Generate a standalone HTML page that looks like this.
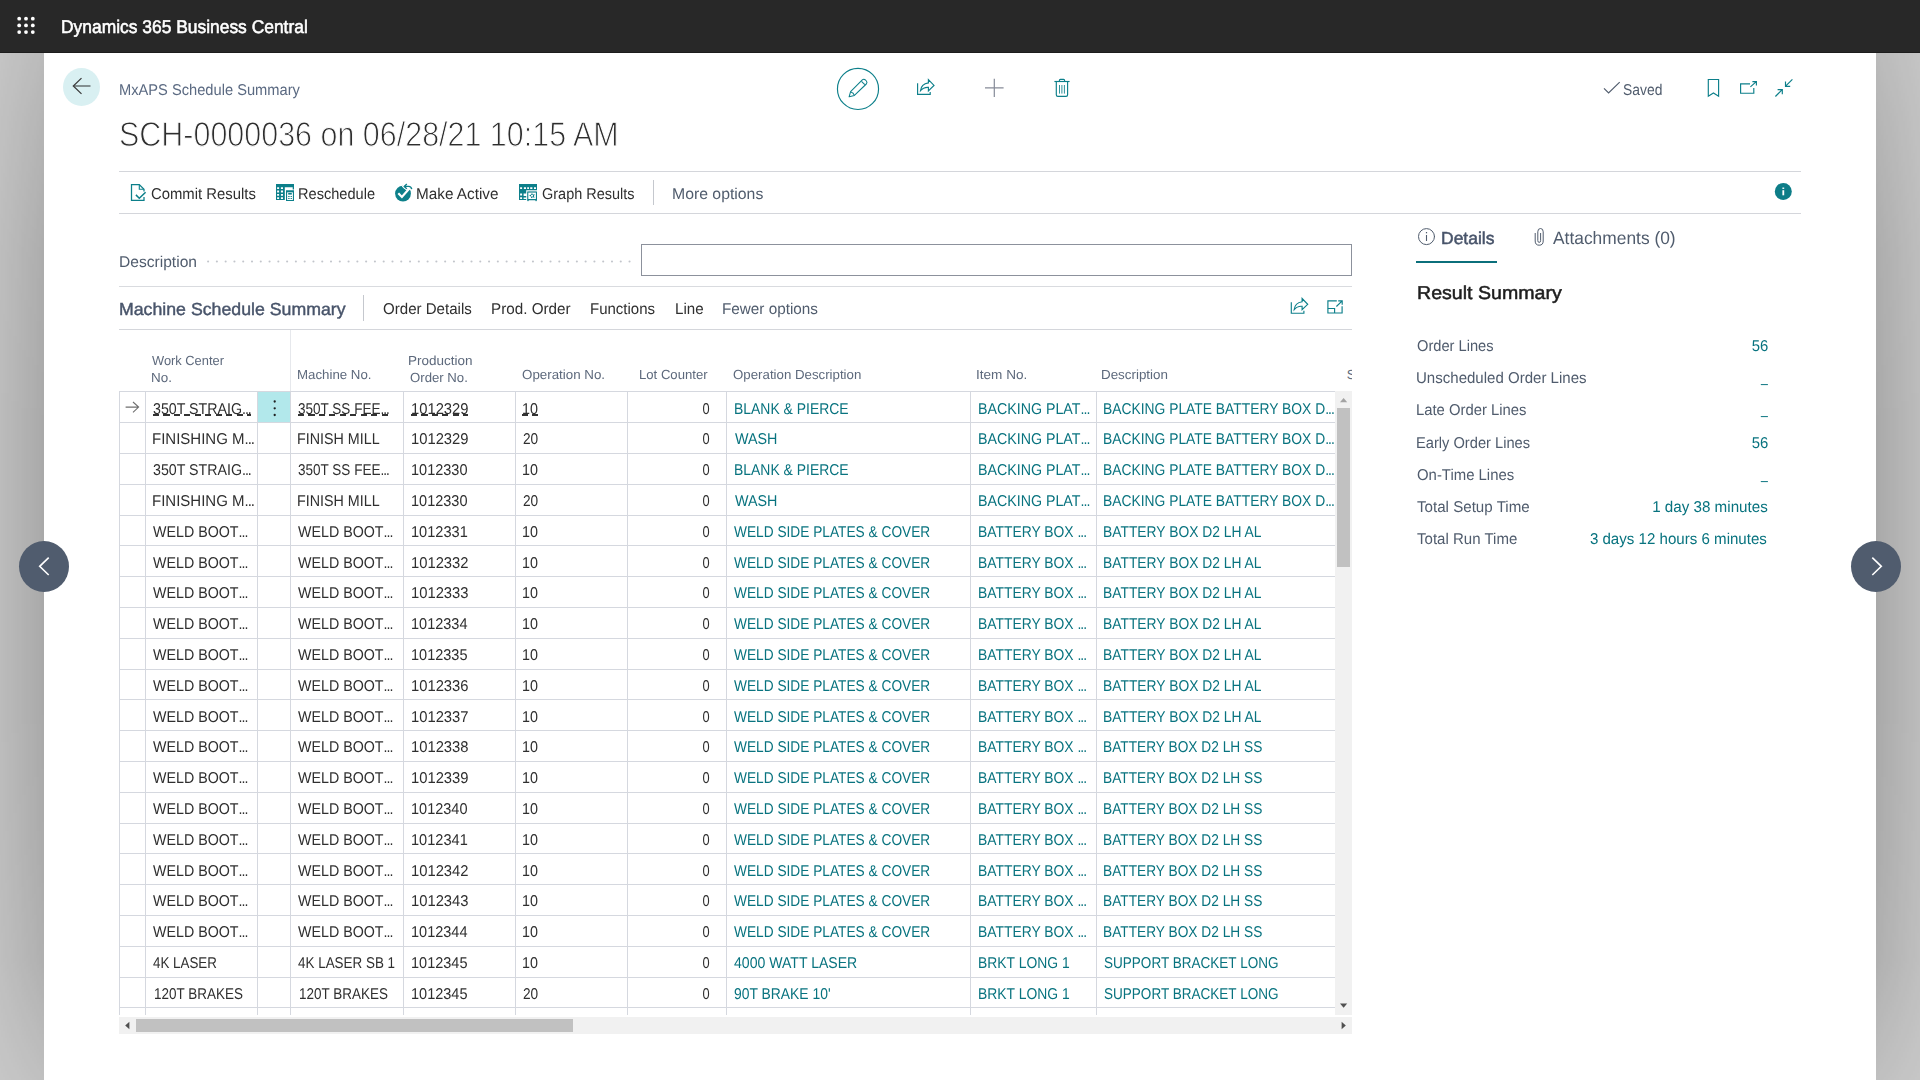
<!DOCTYPE html>
<html lang="en"><head><meta charset="utf-8"><title>MxAPS Schedule Summary - Dynamics 365 Business Central</title>
<style>
html,body{margin:0;padding:0}
body{width:1920px;height:1080px;overflow:hidden;position:relative;font-family:"Liberation Sans", sans-serif;background:#cdcdcd;text-rendering:geometricPrecision}
.abs{position:absolute}
.topbar{position:absolute;left:0;top:0;width:1920px;height:52px;background:#282828;border-bottom:1px solid #1d1d1d}
.page{position:absolute;left:44px;top:53px;width:1832px;height:1027px;background:#fff}
.shw{position:absolute;left:0;top:53px;width:1920px;height:1027px;overflow:hidden;-webkit-mask-image:linear-gradient(to bottom,rgba(0,0,0,.5) 0,rgba(0,0,0,.67) 67px,rgba(0,0,0,.9) 200px,#000 380px,#000 640px,rgba(0,0,0,.93) 800px,rgba(0,0,0,.81) 907px,rgba(0,0,0,.36) 1027px);mask-image:linear-gradient(to bottom,rgba(0,0,0,.5) 0,rgba(0,0,0,.67) 67px,rgba(0,0,0,.9) 200px,#000 380px,#000 640px,rgba(0,0,0,.93) 800px,rgba(0,0,0,.81) 907px,rgba(0,0,0,.36) 1027px)}
.shw>div{position:absolute;left:44px;top:-300px;width:1832px;height:1700px;box-shadow:0 0 118px rgba(0,0,0,.35)}
.nav{position:absolute;width:50px;height:51px;border-radius:50%;background:#505c6e}
.t{position:absolute;white-space:nowrap;margin:0;transform-origin:0 0}
.du{position:absolute;height:2px;background:repeating-linear-gradient(90deg,#333 0,#333 6.1px,transparent 6.1px,transparent 10.45px)}
.el{letter-spacing:-1.1px}
.clipS{width:5.6px;overflow:hidden}
</style></head><body>
<div class="shw"><div></div></div>
<div class="page"></div>
<div class="topbar"></div>
<svg class="abs" style="left:0;top:0" width="52" height="52" viewBox="0 0 52 52" fill="#fff"><circle cx="19.2" cy="18.7" r="1.9"/><circle cx="19.2" cy="25.4" r="1.9"/><circle cx="19.2" cy="32.1" r="1.9"/><circle cx="26.0" cy="18.7" r="1.9"/><circle cx="26.0" cy="25.4" r="1.9"/><circle cx="26.0" cy="32.1" r="1.9"/><circle cx="32.8" cy="18.7" r="1.9"/><circle cx="32.8" cy="25.4" r="1.9"/><circle cx="32.8" cy="32.1" r="1.9"/></svg>
<div class="nav" style="left:19px;top:541px"><svg width="50" height="50" viewBox="0 0 50 50"><path d="M29.7 16.6 L20.7 25.3 L29.7 34" fill="none" stroke="#fff" stroke-width="1.6"/></svg></div>
<div class="nav" style="left:1851px;top:541px"><svg width="50" height="50" viewBox="0 0 50 50"><path d="M21.3 16.6 L30.3 25.3 L21.3 34" fill="none" stroke="#fff" stroke-width="1.6"/></svg></div>
<div class="abs" style="left:63px;top:68px;width:37px;height:38px;border-radius:50%;background:#d9f0f2"></div>
<svg class="abs" style="left:60px;top:64px" width="44" height="44" viewBox="60 64 44 44" fill="none"><path d="M90.5 86 H74" stroke="#667070" stroke-width="1.5"/><path d="M81.5 78.1 L73.3 86 L81.5 93.9" stroke="#3a3a3a" stroke-width="1.25"/></svg>
<div class="abs" style="left:119px;top:171px;width:1682px;height:1px;background:#d4d6db"></div>
<div class="abs" style="left:119px;top:213px;width:1682px;height:1px;background:#d4d6db"></div>
<div class="abs" style="left:119px;top:286px;width:1233px;height:1px;background:#d9dbdf"></div>
<div class="abs" style="left:119px;top:329px;width:1233px;height:1px;background:#d4d6db"></div>
<div class="abs" style="left:653px;top:180px;width:1px;height:25px;background:#c5c8ce"></div>
<div class="abs" style="left:363px;top:295px;width:1px;height:26px;background:#c5c8ce"></div>
<svg class="abs" style="left:0;top:0" width="700" height="300" viewBox="0 0 700 300" fill="#c2c5cb"><circle cx="208.10" cy="261.5" r="1.05"/><circle cx="216.88" cy="261.5" r="1.05"/><circle cx="225.66" cy="261.5" r="1.05"/><circle cx="234.44" cy="261.5" r="1.05"/><circle cx="243.22" cy="261.5" r="1.05"/><circle cx="252.00" cy="261.5" r="1.05"/><circle cx="260.78" cy="261.5" r="1.05"/><circle cx="269.56" cy="261.5" r="1.05"/><circle cx="278.34" cy="261.5" r="1.05"/><circle cx="287.12" cy="261.5" r="1.05"/><circle cx="295.90" cy="261.5" r="1.05"/><circle cx="304.68" cy="261.5" r="1.05"/><circle cx="313.46" cy="261.5" r="1.05"/><circle cx="322.24" cy="261.5" r="1.05"/><circle cx="331.02" cy="261.5" r="1.05"/><circle cx="339.80" cy="261.5" r="1.05"/><circle cx="348.58" cy="261.5" r="1.05"/><circle cx="357.36" cy="261.5" r="1.05"/><circle cx="366.14" cy="261.5" r="1.05"/><circle cx="374.92" cy="261.5" r="1.05"/><circle cx="383.70" cy="261.5" r="1.05"/><circle cx="392.48" cy="261.5" r="1.05"/><circle cx="401.26" cy="261.5" r="1.05"/><circle cx="410.04" cy="261.5" r="1.05"/><circle cx="418.82" cy="261.5" r="1.05"/><circle cx="427.60" cy="261.5" r="1.05"/><circle cx="436.38" cy="261.5" r="1.05"/><circle cx="445.16" cy="261.5" r="1.05"/><circle cx="453.94" cy="261.5" r="1.05"/><circle cx="462.72" cy="261.5" r="1.05"/><circle cx="471.50" cy="261.5" r="1.05"/><circle cx="480.28" cy="261.5" r="1.05"/><circle cx="489.06" cy="261.5" r="1.05"/><circle cx="497.84" cy="261.5" r="1.05"/><circle cx="506.62" cy="261.5" r="1.05"/><circle cx="515.40" cy="261.5" r="1.05"/><circle cx="524.18" cy="261.5" r="1.05"/><circle cx="532.96" cy="261.5" r="1.05"/><circle cx="541.74" cy="261.5" r="1.05"/><circle cx="550.52" cy="261.5" r="1.05"/><circle cx="559.30" cy="261.5" r="1.05"/><circle cx="568.08" cy="261.5" r="1.05"/><circle cx="576.86" cy="261.5" r="1.05"/><circle cx="585.64" cy="261.5" r="1.05"/><circle cx="594.42" cy="261.5" r="1.05"/><circle cx="603.20" cy="261.5" r="1.05"/><circle cx="611.98" cy="261.5" r="1.05"/><circle cx="620.76" cy="261.5" r="1.05"/><circle cx="629.54" cy="261.5" r="1.05"/></svg>
<div class="abs" style="left:641px;top:244px;width:709px;height:30px;border:1px solid #8c919c;background:#fff"></div>
<div class="abs" style="left:1416px;top:261px;width:81px;height:2.4px;background:#0b6f7b"></div>
<svg class="abs" style="left:0;top:0" width="1920" height="1080" viewBox="0 0 1920 1080" shape-rendering="geometricPrecision">
<defs><clipPath id="gc"><rect x="119" y="329" width="1217" height="686"/></clipPath></defs>
<g clip-path="url(#gc)">
<rect x="258" y="392" width="32" height="30" fill="#b2e8eb"/>
<rect x="119" y="391" width="1216" height="1" fill="#d5d8df"/>
<rect x="119" y="422" width="1216" height="1" fill="#d5d8df"/>
<rect x="119" y="453" width="1216" height="1" fill="#d5d8df"/>
<rect x="119" y="484" width="1216" height="1" fill="#d5d8df"/>
<rect x="119" y="515" width="1216" height="1" fill="#d5d8df"/>
<rect x="119" y="545" width="1216" height="1" fill="#d5d8df"/>
<rect x="119" y="576" width="1216" height="1" fill="#d5d8df"/>
<rect x="119" y="607" width="1216" height="1" fill="#d5d8df"/>
<rect x="119" y="638" width="1216" height="1" fill="#d5d8df"/>
<rect x="119" y="669" width="1216" height="1" fill="#d5d8df"/>
<rect x="119" y="699" width="1216" height="1" fill="#d5d8df"/>
<rect x="119" y="730" width="1216" height="1" fill="#d5d8df"/>
<rect x="119" y="761" width="1216" height="1" fill="#d5d8df"/>
<rect x="119" y="792" width="1216" height="1" fill="#d5d8df"/>
<rect x="119" y="823" width="1216" height="1" fill="#d5d8df"/>
<rect x="119" y="853" width="1216" height="1" fill="#d5d8df"/>
<rect x="119" y="884" width="1216" height="1" fill="#d5d8df"/>
<rect x="119" y="915" width="1216" height="1" fill="#d5d8df"/>
<rect x="119" y="946" width="1216" height="1" fill="#d5d8df"/>
<rect x="119" y="977" width="1216" height="1" fill="#d5d8df"/>
<rect x="119" y="1007" width="1216" height="1" fill="#d5d8df"/>
<rect x="119" y="1038" width="1216" height="1" fill="#d5d8df"/>
<rect x="119" y="391" width="1" height="640" fill="#d5d8df"/>
<rect x="145" y="391" width="1" height="640" fill="#d5d8df"/>
<rect x="257" y="391" width="1" height="640" fill="#d5d8df"/>
<rect x="290" y="391" width="1" height="640" fill="#d5d8df"/>
<rect x="403" y="391" width="1" height="640" fill="#d5d8df"/>
<rect x="515" y="391" width="1" height="640" fill="#d5d8df"/>
<rect x="627" y="391" width="1" height="640" fill="#d5d8df"/>
<rect x="726" y="391" width="1" height="640" fill="#d5d8df"/>
<rect x="970" y="391" width="1" height="640" fill="#d5d8df"/>
<rect x="1096" y="391" width="1" height="640" fill="#d5d8df"/>
<rect x="290" y="330" width="1" height="61" fill="#e6e8ec"/>
</g>
<path d="M125.6 407.1 H138.6 M133 402 L138.6 407.1 L133 412.3" fill="none" stroke="#6f6f6f" stroke-width="1.1"/>
<circle cx="274.7" cy="401.5" r="1.15" fill="#1f1f1f"/>
<circle cx="274.7" cy="408.3" r="1.15" fill="#1f1f1f"/>
<circle cx="274.7" cy="415.0" r="1.15" fill="#1f1f1f"/>
</svg>
<div class="abs" style="left:1335px;top:391px;width:17px;height:624px;background:#f1f1f1"></div>
<div class="abs" style="left:1337px;top:408px;width:13px;height:159px;background:#c1c1c1"></div>
<svg class="abs" style="left:1335px;top:391px" width="17" height="624" viewBox="0 0 17 624"><path d="M5 11.2 L8.6 7 L12.2 11.2Z" fill="#a3a3a3"/><path d="M5 612.6 L8.6 616.8 L12.2 612.6Z" fill="#505050"/></svg>
<div class="abs" style="left:119px;top:1017px;width:1233px;height:17px;background:#f1f1f1"></div>
<div class="abs" style="left:136px;top:1019px;width:437px;height:13px;background:#c1c1c1"></div>
<svg class="abs" style="left:119px;top:1017px" width="1233" height="17" viewBox="0 0 1233 17"><path d="M10.4 4.8 L6.2 8.5 L10.4 12.2Z" fill="#505050"/><path d="M1222.6 4.8 L1226.8 8.5 L1222.6 12.2Z" fill="#505050"/></svg>
<svg class="abs" style="left:0;top:0" width="1920" height="1080" viewBox="0 0 1920 1080" fill="none" stroke-linejoin="round" stroke-linecap="round">
<g stroke="#0c7f8a" stroke-width="1.25" stroke-linecap="butt" stroke-linejoin="miter"><path d="M144 197 V200.3 H131.5 V184.6 H139.3 L144 189.3 V191.5"/><path d="M139.3 184.8 V189.2 H143.8" stroke-width="1.1"/><path d="M135.9 194.9 L139.3 198.3 L145.6 192.2" stroke-width="1.5"/></g>
<g fill="#0c7f8a" stroke="none"><path fill-rule="evenodd" d="M276 184 H294 V189.6 H292.7 V187.2 H284.8 V200 H276 Z M277.1 187.2 H279.1 V189 H277.1Z M280.9 187.2 H283 V189 H280.9Z M277.1 190.6 H279.1 V192.4 H277.1Z M280.9 190.6 H283 V192.4 H280.9Z M277.1 194 H279.1 V195.8 H277.1Z M280.9 194 H283 V195.8 H280.9Z M277.1 197.3 H279.1 V199 H277.1Z M280.9 197.3 H283 V199 H280.9Z"/><path fill-rule="evenodd" d="M286 190.2 H294 V201 H286Z M287.1 192.2 H292.9 V199.9 H287.1Z"/><rect x="288.2" y="193" width="3.6" height="1.6"/><rect x="288.2" y="196" width="1.4" height="1"/><rect x="290.6" y="196" width="1.3" height="1"/><rect x="288.2" y="198" width="1.4" height="1"/><rect x="290.6" y="198" width="1.3" height="1"/><rect x="287.1" y="191.2" width="5.8" height="1.2" opacity=".35"/></g>
<g><circle cx="403" cy="193.6" r="7.9" fill="#0d808a" stroke="none"/><path d="M403.8 186.4 H408.8 Q411.6 186.6 411.9 189.6" stroke="#fff" stroke-width="4" stroke-linecap="butt"/><path d="M407.4 183.4 L404 186.4 L407.4 189.4" stroke="#fff" stroke-width="3" stroke-linecap="butt" stroke-linejoin="miter"/><path d="M398.3 193.2 L401.9 196.9 L409.8 187.9" stroke="#fff" stroke-width="2.2" stroke-linecap="butt" stroke-linejoin="miter"/><path d="M404.6 186.4 H408.6 Q411.3 186.5 411.7 189.2" stroke="#0c7f8a" stroke-width="1.4" stroke-linecap="butt"/><path d="M406.8 184.1 L404.3 186.4 L406.8 188.7" stroke="#0c7f8a" stroke-width="1.4" stroke-linecap="butt" stroke-linejoin="miter"/></g>
<g fill="#0c7f8a" stroke="none"><path fill-rule="evenodd" d="M519 184 H537 V190.2 H526.2 V200 H519 Z M520.1 187.2 H522.1 V189 H520.1Z M523.9 187.2 H526 V189 H523.9Z M527.2 187.2 H529 V189 H527.2Z M530.2 187.2 H532.4 V189 H530.2Z M534 187.2 H536 V189 H534Z M520.1 193.6 H522.1 V195.6 H520.1Z M523.6 193.6 H526.2 V196 H523.6Z M520.1 197.2 H522.1 V199 H520.1Z M523.6 197.4 H526.2 V199 H523.6Z"/><path fill-rule="evenodd" d="M527.2 191.4 H537 V200.2 H527.2Z M528.3 192.6 H535.9 V199 H528.3Z"/><rect x="527.2" y="200.2" width="1.6" height="0.9"/><rect x="535.3" y="200.2" width="1.6" height="0.9"/><path fill-rule="evenodd" d="M532 192.9 L532.9 194.5 L534.9 194.3 L533.9 195.9 L534.6 197.8 L532.7 197.2 L531.2 198.3 L530.9 196.5 L529.1 195.6 L530.8 194.8 Z M532 194.7 A0.95 0.95 0 1 0 532.01 194.7Z"/><rect x="528.3" y="191.4" width="7.6" height="1.2" opacity=".3"/></g>
<circle cx="1783.3" cy="191.4" r="8.5" fill="#0d7d88" stroke="none"/>
<rect x="1782.4" y="190.2" width="1.8" height="5.1" fill="#fff" stroke="none"/><rect x="1782.4" y="187.5" width="1.8" height="1.5" fill="#fff" stroke="none" opacity=".9"/>
<circle cx="858" cy="88.9" r="20.55" stroke="#0c7f8a" stroke-width="1.15"/>
<g stroke="#0c7f8a" stroke-width="1.05" stroke-linecap="butt"><path d="M850.6 91.6 L862.3 79.9 Q863.9 78.6 865.4 80 L866.4 81 Q867.6 82.5 866.3 84 L854.4 95.4 L849.1 96.8 Z"/><path d="M861.5 81.3 L864.8 84.6"/><path d="M850.8 91.9 Q853.6 92.4 854.2 95.1"/></g>
<g stroke="#0c7f8a" stroke-width="1.15" stroke-linecap="butt" stroke-linejoin="miter" transform="translate(0 0)"><path d="M917.6 83.3 V94.4 H930.2 V91.9"/><path d="M928.4 79.6 L934 85.4 L928.4 90.8 V87.4 Q923.6 87 920.5 90.7 Q921.2 84 928.4 82.9 Z"/></g>
<path d="M985 87.9 H1003.6 M994.3 78.8 V97" stroke="#868b98" stroke-width="1.2" stroke-linecap="butt"/>
<g stroke="#0c7f8a" stroke-width="1.15" stroke-linecap="butt"><path d="M1054.4 81.5 H1069.6"/><path d="M1059.4 81.3 V80.4 Q1059.4 79.4 1060.4 79.4 H1063.6 Q1064.6 79.4 1064.6 80.4 V81.3"/><path d="M1056.3 81.6 V94.8 Q1056.3 96.4 1057.9 96.4 H1066 Q1067.6 96.4 1067.6 94.8 V81.6"/><path d="M1059.5 85 V93.6 M1061.9 85 V93.6 M1064.4 85 V93.6" stroke-width="1" opacity=".85"/></g>
<path d="M1604 88.4 L1608.6 93 L1619.7 82.2" stroke="#505c6d" stroke-width="1.15" stroke-linecap="butt" stroke-linejoin="miter"/>
<path d="M1708.3 79.5 H1718.6 V96.2 L1713.45 92.9 L1708.3 96.2 Z" stroke="#0c7f8a" stroke-width="1.15" stroke-linejoin="miter"/>
<g stroke="#0c7f8a" stroke-width="1.15" stroke-linecap="butt" stroke-linejoin="miter"><path d="M1750 83.9 H1740.6 V93.2 H1753.8 V88"/><path d="M1750.4 86.9 L1756.3 81.6 M1752.4 81.6 H1756.4 V85.6"/></g>
<g stroke="#0c7f8a" stroke-width="1.15" stroke-linecap="butt" stroke-linejoin="miter"><path d="M1792.4 79.4 L1785.6 86.2 M1785.5 81.6 V86.3 H1790.2"/><path d="M1775.4 96.5 L1782.2 89.7 M1777.6 89.6 H1782.3 V94.3"/></g>
<circle cx="1426.5" cy="236.6" r="8" stroke="#505c6d" stroke-width="1"/><path d="M1426.5 235 V241" stroke="#505c6d" stroke-width="1.1" stroke-linecap="butt"/><rect x="1425.9" y="232" width="1.2" height="1.3" fill="#505c6d" stroke="none"/>
<g stroke="#505c6d" stroke-width="1" stroke-linecap="butt"><path d="M1535.2 233 V241 Q1535.2 245.2 1539.2 245.2 Q1543.2 245.2 1543.2 241 V231.8 Q1543.2 228.5 1540.5 228.5 Q1537.8 228.5 1537.8 231.8 V240.6 Q1537.8 242.4 1539.2 242.4 Q1540.6 242.4 1540.6 240.6 V233"/></g>
<g stroke="#0c7f8a" stroke-width="1.15" stroke-linecap="butt" stroke-linejoin="miter" transform="translate(373.7 218.9)"><path d="M917.6 83.3 V94.4 H930.2 V91.9"/><path d="M928.4 79.6 L934 85.4 L928.4 90.8 V87.4 Q923.6 87 920.5 90.7 Q921.2 84 928.4 82.9 Z"/></g>
<g stroke="#0c7f8a" stroke-width="1.15" stroke-linecap="butt" stroke-linejoin="miter"><path d="M1336.8 300.9 H1327.9 V313 H1342.1 V306.2"/><path d="M1327.9 308.5 H1334.6 V313"/><path d="M1336.4 306.5 L1342.2 300.8 M1338.2 300.9 H1342.2 V304.8"/></g>
</svg>
<div class="t" style="top:18.00px;font-size:18.4px;line-height:18.4px;height:18.4px;color:#fff;-webkit-text-stroke:0.55px #fff;transform:scaleX(0.9468);left:61.45px;">Dynamics 365 Business Central</div>
<div class="t" style="top:83.00px;font-size:15.6px;line-height:15.6px;height:15.6px;color:#5b6a82;transform:scaleX(0.9400);left:118.96px;">MxAPS Schedule Summary</div>
<div class="t" style="top:118.00px;font-size:34.4px;line-height:34.4px;height:34.4px;color:#2e2e2e;-webkit-text-stroke:1.0px #fff;transform:scaleX(0.8857);left:118.61px;">SCH-0000036 on 06/28/21 10:15 AM</div>
<div class="t" style="top:187.00px;font-size:15.6px;line-height:15.6px;height:15.6px;color:#2f2f2f;transform:scaleX(0.9524);left:150.80px;">Commit Results</div>
<div class="t" style="top:187.00px;font-size:15.6px;line-height:15.6px;height:15.6px;color:#2f2f2f;transform:scaleX(0.9358);left:297.76px;">Reschedule</div>
<div class="t" style="top:187.00px;font-size:15.6px;line-height:15.6px;height:15.6px;color:#2f2f2f;transform:scaleX(0.9819);left:416.02px;">Make Active</div>
<div class="t" style="top:187.00px;font-size:15.6px;line-height:15.6px;height:15.6px;color:#2f2f2f;transform:scaleX(0.9282);left:541.50px;">Graph Results</div>
<div class="t" style="top:187.00px;font-size:15.6px;line-height:15.6px;height:15.6px;color:#505c6d;transform:scaleX(1.0129);left:672.29px;">More options</div>
<div class="t" style="top:83.00px;font-size:15.6px;line-height:15.6px;height:15.6px;color:#505c6d;transform:scaleX(0.8899);left:1622.75px;">Saved</div>
<div class="t" style="top:255.00px;font-size:15.6px;line-height:15.6px;height:15.6px;color:#505c6d;transform:scaleX(0.9997);left:118.90px;">Description</div>
<div class="t" style="top:301.00px;font-size:17.4px;line-height:17.4px;height:17.4px;color:#48546a;-webkit-text-stroke:0.42px #48546a;transform:scaleX(1.0189);left:118.88px;">Machine Schedule Summary</div>
<div class="t" style="top:302.00px;font-size:15.6px;line-height:15.6px;height:15.6px;color:#2f2f2f;transform:scaleX(0.9668);left:382.70px;">Order Details</div>
<div class="t" style="top:302.00px;font-size:15.6px;line-height:15.6px;height:15.6px;color:#2f2f2f;transform:scaleX(0.9767);left:491.32px;">Prod. Order</div>
<div class="t" style="top:302.00px;font-size:15.6px;line-height:15.6px;height:15.6px;color:#2f2f2f;transform:scaleX(0.9624);left:589.74px;">Functions</div>
<div class="t" style="top:302.00px;font-size:15.6px;line-height:15.6px;height:15.6px;color:#2f2f2f;transform:scaleX(0.9709);left:674.73px;">Line</div>
<div class="t" style="top:302.00px;font-size:15.6px;line-height:15.6px;height:15.6px;color:#505c6d;transform:scaleX(0.9800);left:721.62px;">Fewer options</div>
<div class="t" style="top:230.00px;font-size:17.3px;line-height:17.3px;height:17.3px;color:#48546a;-webkit-text-stroke:0.5px #48546a;transform:scaleX(1.0118);left:1440.89px;">Details</div>
<div class="t" style="top:230.00px;font-size:17.9px;line-height:17.9px;height:17.9px;color:#505c6d;transform:scaleX(0.9711);left:1552.50px;">Attachments (0)</div>
<div class="t" style="top:284.00px;font-size:18.7px;line-height:18.7px;height:18.7px;color:#1e1e1e;-webkit-text-stroke:0.5px #1e1e1e;transform:scaleX(1.0481);left:1416.55px;">Result Summary</div>
<div class="t" style="top:339.00px;font-size:15.6px;line-height:15.6px;height:15.6px;color:#505c6d;transform:scaleX(0.9391);left:1416.70px;">Order Lines</div>
<div class="t" style="top:339.00px;font-size:15.6px;line-height:15.6px;height:15.6px;color:#08737f;transform:scaleX(0.9537);right:151.86px;transform-origin:100% 0;">56</div>
<div class="t" style="top:371.00px;font-size:15.6px;line-height:15.6px;height:15.6px;color:#505c6d;transform:scaleX(0.9646);left:1415.74px;">Unscheduled Order Lines</div>
<div class="t" style="top:370.00px;font-size:15.6px;line-height:15.6px;height:15.6px;color:#08737f;transform:scaleX(0.7800);right:152.76px;transform-origin:100% 0;">_</div>
<div class="t" style="top:403.00px;font-size:15.6px;line-height:15.6px;height:15.6px;color:#505c6d;transform:scaleX(0.9510);left:1415.75px;">Late Order Lines</div>
<div class="t" style="top:402.00px;font-size:15.6px;line-height:15.6px;height:15.6px;color:#08737f;transform:scaleX(0.7800);right:152.76px;transform-origin:100% 0;">_</div>
<div class="t" style="top:436.00px;font-size:15.6px;line-height:15.6px;height:15.6px;color:#505c6d;transform:scaleX(0.9400);left:1415.76px;">Early Order Lines</div>
<div class="t" style="top:436.00px;font-size:15.6px;line-height:15.6px;height:15.6px;color:#08737f;transform:scaleX(0.9537);right:151.86px;transform-origin:100% 0;">56</div>
<div class="t" style="top:468.00px;font-size:15.6px;line-height:15.6px;height:15.6px;color:#505c6d;transform:scaleX(0.9560);left:1416.70px;">On-Time Lines</div>
<div class="t" style="top:467.00px;font-size:15.6px;line-height:15.6px;height:15.6px;color:#08737f;transform:scaleX(0.7800);right:152.76px;transform-origin:100% 0;">_</div>
<div class="t" style="top:500.00px;font-size:15.6px;line-height:15.6px;height:15.6px;color:#505c6d;transform:scaleX(0.9702);left:1416.70px;">Total Setup Time</div>
<div class="t" style="top:500.00px;font-size:15.6px;line-height:15.6px;height:15.6px;color:#08737f;transform:scaleX(0.9732);right:152.70px;transform-origin:100% 0;">1 day 38 minutes</div>
<div class="t" style="top:532.00px;font-size:15.6px;line-height:15.6px;height:15.6px;color:#505c6d;transform:scaleX(0.9642);left:1416.70px;">Total Run Time</div>
<div class="t" style="top:532.00px;font-size:15.6px;line-height:15.6px;height:15.6px;color:#08737f;transform:scaleX(0.9678);right:152.70px;transform-origin:100% 0;">3 days 12 hours 6 minutes</div>
<div class="t" style="top:354.00px;font-size:13.2px;line-height:13.2px;height:13.2px;color:#5d697c;transform:scaleX(0.9747);left:152.00px;">Work Center</div>
<div class="t" style="top:371.00px;font-size:13.2px;line-height:13.2px;height:13.2px;color:#5d697c;transform:scaleX(1.0181);left:151.28px;">No.</div>
<div class="t" style="top:368.00px;font-size:13.2px;line-height:13.2px;height:13.2px;color:#5d697c;transform:scaleX(1.0060);left:296.74px;">Machine No.</div>
<div class="t" style="top:354.00px;font-size:13.2px;line-height:13.2px;height:13.2px;color:#5d697c;transform:scaleX(1.0225);left:408.48px;">Production</div>
<div class="t" style="top:371.00px;font-size:13.2px;line-height:13.2px;height:13.2px;color:#5d697c;transform:scaleX(0.9995);left:409.50px;">Order No.</div>
<div class="t" style="top:368.00px;font-size:13.2px;line-height:13.2px;height:13.2px;color:#5d697c;transform:scaleX(1.0118);left:521.60px;">Operation No.</div>
<div class="t" style="top:368.00px;font-size:13.2px;line-height:13.2px;height:13.2px;color:#5d697c;transform:scaleX(0.9953);left:638.90px;">Lot Counter</div>
<div class="t" style="top:368.00px;font-size:13.2px;line-height:13.2px;height:13.2px;color:#5d697c;transform:scaleX(1.0062);left:732.75px;">Operation Description</div>
<div class="t" style="top:368.00px;font-size:13.2px;line-height:13.2px;height:13.2px;color:#5d697c;transform:scaleX(1.0297);left:976.07px;">Item No.</div>
<div class="t" style="top:368.00px;font-size:13.2px;line-height:13.2px;height:13.2px;color:#5d697c;transform:scaleX(1.0150);left:1101.28px;">Description</div>
<div class="t clipS" style="top:368.00px;font-size:13.2px;line-height:13.2px;height:13.2px;color:#5d697c;transform:scaleX(1.0000);left:1346.70px;">S</div>
<div class="du" style="left:153.1px;top:414px;width:98.0px"></div><div class="t" style="top:402.00px;font-size:15.6px;line-height:15.6px;height:15.6px;color:#2f2f2f;transform:scaleX(0.9107);left:153.10px;">350T STRAIG<span class="el">...</span></div>
<div class="du" style="left:298.2px;top:414px;width:91.1px"></div><div class="t" style="top:402.00px;font-size:15.6px;line-height:15.6px;height:15.6px;color:#2f2f2f;transform:scaleX(0.8674);left:298.20px;">350T SS FEE<span class="el">...</span></div>
<div class="du" style="left:410.6px;top:414px;width:57.5px"></div><div class="t" style="top:402.00px;font-size:15.6px;line-height:15.6px;height:15.6px;color:#2f2f2f;transform:scaleX(0.9469);left:410.55px;">1012329</div>
<div class="du" style="left:522.4px;top:414px;width:15.9px"></div><div class="t" style="top:402.00px;font-size:15.6px;line-height:15.6px;height:15.6px;color:#2f2f2f;transform:scaleX(0.9177);left:522.38px;">10</div>
<div class="t" style="top:402.00px;font-size:15.6px;line-height:15.6px;height:15.6px;color:#2f2f2f;transform:scaleX(0.8222);right:1210.27px;transform-origin:100% 0;">0</div>
<div class="t" style="top:402.00px;font-size:15.6px;line-height:15.6px;height:15.6px;color:#08737f;transform:scaleX(0.8939);left:733.81px;">BLANK &amp; PIERCE</div>
<div class="t" style="top:402.00px;font-size:15.6px;line-height:15.6px;height:15.6px;color:#08737f;transform:scaleX(0.9121);left:977.69px;">BACKING PLAT<span class="el">...</span></div>
<div class="t" style="top:402.00px;font-size:15.6px;line-height:15.6px;height:15.6px;color:#08737f;transform:scaleX(0.8880);left:1103.31px;">BACKING PLATE BATTERY BOX D<span class="el">...</span></div>
<div class="t" style="top:432.00px;font-size:15.6px;line-height:15.6px;height:15.6px;color:#2f2f2f;transform:scaleX(0.9625);left:152.14px;">FINISHING M<span class="el">...</span></div>
<div class="t" style="top:432.00px;font-size:15.6px;line-height:15.6px;height:15.6px;color:#2f2f2f;transform:scaleX(0.9168);left:297.28px;">FINISH MILL</div>
<div class="t" style="top:432.00px;font-size:15.6px;line-height:15.6px;height:15.6px;color:#2f2f2f;transform:scaleX(0.9469);left:410.55px;">1012329</div>
<div class="t" style="top:432.00px;font-size:15.6px;line-height:15.6px;height:15.6px;color:#2f2f2f;transform:scaleX(0.8771);left:523.30px;">20</div>
<div class="t" style="top:432.00px;font-size:15.6px;line-height:15.6px;height:15.6px;color:#2f2f2f;transform:scaleX(0.8222);right:1210.27px;transform-origin:100% 0;">0</div>
<div class="t" style="top:432.00px;font-size:15.6px;line-height:15.6px;height:15.6px;color:#08737f;transform:scaleX(0.9190);left:734.50px;">WASH</div>
<div class="t" style="top:432.00px;font-size:15.6px;line-height:15.6px;height:15.6px;color:#08737f;transform:scaleX(0.9121);left:977.69px;">BACKING PLAT<span class="el">...</span></div>
<div class="t" style="top:432.00px;font-size:15.6px;line-height:15.6px;height:15.6px;color:#08737f;transform:scaleX(0.8880);left:1103.31px;">BACKING PLATE BATTERY BOX D<span class="el">...</span></div>
<div class="t" style="top:463.00px;font-size:15.6px;line-height:15.6px;height:15.6px;color:#2f2f2f;transform:scaleX(0.9107);left:153.10px;">350T STRAIG<span class="el">...</span></div>
<div class="t" style="top:463.00px;font-size:15.6px;line-height:15.6px;height:15.6px;color:#2f2f2f;transform:scaleX(0.8674);left:298.20px;">350T SS FEE<span class="el">...</span></div>
<div class="t" style="top:463.00px;font-size:15.6px;line-height:15.6px;height:15.6px;color:#2f2f2f;transform:scaleX(0.9311);left:410.57px;">1012330</div>
<div class="t" style="top:463.00px;font-size:15.6px;line-height:15.6px;height:15.6px;color:#2f2f2f;transform:scaleX(0.9177);left:522.38px;">10</div>
<div class="t" style="top:463.00px;font-size:15.6px;line-height:15.6px;height:15.6px;color:#2f2f2f;transform:scaleX(0.8222);right:1210.27px;transform-origin:100% 0;">0</div>
<div class="t" style="top:463.00px;font-size:15.6px;line-height:15.6px;height:15.6px;color:#08737f;transform:scaleX(0.8939);left:733.81px;">BLANK &amp; PIERCE</div>
<div class="t" style="top:463.00px;font-size:15.6px;line-height:15.6px;height:15.6px;color:#08737f;transform:scaleX(0.9121);left:977.69px;">BACKING PLAT<span class="el">...</span></div>
<div class="t" style="top:463.00px;font-size:15.6px;line-height:15.6px;height:15.6px;color:#08737f;transform:scaleX(0.8880);left:1103.31px;">BACKING PLATE BATTERY BOX D<span class="el">...</span></div>
<div class="t" style="top:494.00px;font-size:15.6px;line-height:15.6px;height:15.6px;color:#2f2f2f;transform:scaleX(0.9625);left:152.14px;">FINISHING M<span class="el">...</span></div>
<div class="t" style="top:494.00px;font-size:15.6px;line-height:15.6px;height:15.6px;color:#2f2f2f;transform:scaleX(0.9168);left:297.28px;">FINISH MILL</div>
<div class="t" style="top:494.00px;font-size:15.6px;line-height:15.6px;height:15.6px;color:#2f2f2f;transform:scaleX(0.9311);left:410.57px;">1012330</div>
<div class="t" style="top:494.00px;font-size:15.6px;line-height:15.6px;height:15.6px;color:#2f2f2f;transform:scaleX(0.8771);left:523.30px;">20</div>
<div class="t" style="top:494.00px;font-size:15.6px;line-height:15.6px;height:15.6px;color:#2f2f2f;transform:scaleX(0.8222);right:1210.27px;transform-origin:100% 0;">0</div>
<div class="t" style="top:494.00px;font-size:15.6px;line-height:15.6px;height:15.6px;color:#08737f;transform:scaleX(0.9190);left:734.50px;">WASH</div>
<div class="t" style="top:494.00px;font-size:15.6px;line-height:15.6px;height:15.6px;color:#08737f;transform:scaleX(0.9121);left:977.69px;">BACKING PLAT<span class="el">...</span></div>
<div class="t" style="top:494.00px;font-size:15.6px;line-height:15.6px;height:15.6px;color:#08737f;transform:scaleX(0.8880);left:1103.31px;">BACKING PLATE BATTERY BOX D<span class="el">...</span></div>
<div class="t" style="top:525.00px;font-size:15.6px;line-height:15.6px;height:15.6px;color:#2f2f2f;transform:scaleX(0.9143);left:153.20px;">WELD BOOT<span class="el">...</span></div>
<div class="t" style="top:525.00px;font-size:15.6px;line-height:15.6px;height:15.6px;color:#2f2f2f;transform:scaleX(0.9143);left:298.20px;">WELD BOOT<span class="el">...</span></div>
<div class="t" style="top:525.00px;font-size:15.6px;line-height:15.6px;height:15.6px;color:#2f2f2f;transform:scaleX(0.9350);left:410.56px;">1012331</div>
<div class="t" style="top:525.00px;font-size:15.6px;line-height:15.6px;height:15.6px;color:#2f2f2f;transform:scaleX(0.9177);left:522.38px;">10</div>
<div class="t" style="top:525.00px;font-size:15.6px;line-height:15.6px;height:15.6px;color:#2f2f2f;transform:scaleX(0.8222);right:1210.27px;transform-origin:100% 0;">0</div>
<div class="t" style="top:525.00px;font-size:15.6px;line-height:15.6px;height:15.6px;color:#08737f;transform:scaleX(0.8789);left:734.10px;">WELD SIDE PLATES &amp; COVER</div>
<div class="t" style="top:525.00px;font-size:15.6px;line-height:15.6px;height:15.6px;color:#08737f;transform:scaleX(0.8894);left:977.51px;">BATTERY BOX <span class="el">...</span></div>
<div class="t" style="top:525.00px;font-size:15.6px;line-height:15.6px;height:15.6px;color:#08737f;transform:scaleX(0.8877);left:1102.91px;">BATTERY BOX D2 LH AL</div>
<div class="t" style="top:556.00px;font-size:15.6px;line-height:15.6px;height:15.6px;color:#2f2f2f;transform:scaleX(0.9143);left:153.20px;">WELD BOOT<span class="el">...</span></div>
<div class="t" style="top:556.00px;font-size:15.6px;line-height:15.6px;height:15.6px;color:#2f2f2f;transform:scaleX(0.9143);left:298.20px;">WELD BOOT<span class="el">...</span></div>
<div class="t" style="top:556.00px;font-size:15.6px;line-height:15.6px;height:15.6px;color:#2f2f2f;transform:scaleX(0.9469);left:410.55px;">1012332</div>
<div class="t" style="top:556.00px;font-size:15.6px;line-height:15.6px;height:15.6px;color:#2f2f2f;transform:scaleX(0.9177);left:522.38px;">10</div>
<div class="t" style="top:556.00px;font-size:15.6px;line-height:15.6px;height:15.6px;color:#2f2f2f;transform:scaleX(0.8222);right:1210.27px;transform-origin:100% 0;">0</div>
<div class="t" style="top:556.00px;font-size:15.6px;line-height:15.6px;height:15.6px;color:#08737f;transform:scaleX(0.8789);left:734.10px;">WELD SIDE PLATES &amp; COVER</div>
<div class="t" style="top:556.00px;font-size:15.6px;line-height:15.6px;height:15.6px;color:#08737f;transform:scaleX(0.8894);left:977.51px;">BATTERY BOX <span class="el">...</span></div>
<div class="t" style="top:556.00px;font-size:15.6px;line-height:15.6px;height:15.6px;color:#08737f;transform:scaleX(0.8877);left:1102.91px;">BATTERY BOX D2 LH AL</div>
<div class="t" style="top:586.00px;font-size:15.6px;line-height:15.6px;height:15.6px;color:#2f2f2f;transform:scaleX(0.9143);left:153.20px;">WELD BOOT<span class="el">...</span></div>
<div class="t" style="top:586.00px;font-size:15.6px;line-height:15.6px;height:15.6px;color:#2f2f2f;transform:scaleX(0.9143);left:298.20px;">WELD BOOT<span class="el">...</span></div>
<div class="t" style="top:586.00px;font-size:15.6px;line-height:15.6px;height:15.6px;color:#2f2f2f;transform:scaleX(0.9469);left:410.55px;">1012333</div>
<div class="t" style="top:586.00px;font-size:15.6px;line-height:15.6px;height:15.6px;color:#2f2f2f;transform:scaleX(0.9177);left:522.38px;">10</div>
<div class="t" style="top:586.00px;font-size:15.6px;line-height:15.6px;height:15.6px;color:#2f2f2f;transform:scaleX(0.8222);right:1210.27px;transform-origin:100% 0;">0</div>
<div class="t" style="top:586.00px;font-size:15.6px;line-height:15.6px;height:15.6px;color:#08737f;transform:scaleX(0.8789);left:734.10px;">WELD SIDE PLATES &amp; COVER</div>
<div class="t" style="top:586.00px;font-size:15.6px;line-height:15.6px;height:15.6px;color:#08737f;transform:scaleX(0.8894);left:977.51px;">BATTERY BOX <span class="el">...</span></div>
<div class="t" style="top:586.00px;font-size:15.6px;line-height:15.6px;height:15.6px;color:#08737f;transform:scaleX(0.8877);left:1102.91px;">BATTERY BOX D2 LH AL</div>
<div class="t" style="top:617.00px;font-size:15.6px;line-height:15.6px;height:15.6px;color:#2f2f2f;transform:scaleX(0.9143);left:153.20px;">WELD BOOT<span class="el">...</span></div>
<div class="t" style="top:617.00px;font-size:15.6px;line-height:15.6px;height:15.6px;color:#2f2f2f;transform:scaleX(0.9143);left:298.20px;">WELD BOOT<span class="el">...</span></div>
<div class="t" style="top:617.00px;font-size:15.6px;line-height:15.6px;height:15.6px;color:#2f2f2f;transform:scaleX(0.9311);left:410.57px;">1012334</div>
<div class="t" style="top:617.00px;font-size:15.6px;line-height:15.6px;height:15.6px;color:#2f2f2f;transform:scaleX(0.9177);left:522.38px;">10</div>
<div class="t" style="top:617.00px;font-size:15.6px;line-height:15.6px;height:15.6px;color:#2f2f2f;transform:scaleX(0.8222);right:1210.27px;transform-origin:100% 0;">0</div>
<div class="t" style="top:617.00px;font-size:15.6px;line-height:15.6px;height:15.6px;color:#08737f;transform:scaleX(0.8789);left:734.10px;">WELD SIDE PLATES &amp; COVER</div>
<div class="t" style="top:617.00px;font-size:15.6px;line-height:15.6px;height:15.6px;color:#08737f;transform:scaleX(0.8894);left:977.51px;">BATTERY BOX <span class="el">...</span></div>
<div class="t" style="top:617.00px;font-size:15.6px;line-height:15.6px;height:15.6px;color:#08737f;transform:scaleX(0.8877);left:1102.91px;">BATTERY BOX D2 LH AL</div>
<div class="t" style="top:648.00px;font-size:15.6px;line-height:15.6px;height:15.6px;color:#2f2f2f;transform:scaleX(0.9143);left:153.20px;">WELD BOOT<span class="el">...</span></div>
<div class="t" style="top:648.00px;font-size:15.6px;line-height:15.6px;height:15.6px;color:#2f2f2f;transform:scaleX(0.9143);left:298.20px;">WELD BOOT<span class="el">...</span></div>
<div class="t" style="top:648.00px;font-size:15.6px;line-height:15.6px;height:15.6px;color:#2f2f2f;transform:scaleX(0.9311);left:410.57px;">1012335</div>
<div class="t" style="top:648.00px;font-size:15.6px;line-height:15.6px;height:15.6px;color:#2f2f2f;transform:scaleX(0.9177);left:522.38px;">10</div>
<div class="t" style="top:648.00px;font-size:15.6px;line-height:15.6px;height:15.6px;color:#2f2f2f;transform:scaleX(0.8222);right:1210.27px;transform-origin:100% 0;">0</div>
<div class="t" style="top:648.00px;font-size:15.6px;line-height:15.6px;height:15.6px;color:#08737f;transform:scaleX(0.8789);left:734.10px;">WELD SIDE PLATES &amp; COVER</div>
<div class="t" style="top:648.00px;font-size:15.6px;line-height:15.6px;height:15.6px;color:#08737f;transform:scaleX(0.8894);left:977.51px;">BATTERY BOX <span class="el">...</span></div>
<div class="t" style="top:648.00px;font-size:15.6px;line-height:15.6px;height:15.6px;color:#08737f;transform:scaleX(0.8877);left:1102.91px;">BATTERY BOX D2 LH AL</div>
<div class="t" style="top:679.00px;font-size:15.6px;line-height:15.6px;height:15.6px;color:#2f2f2f;transform:scaleX(0.9143);left:153.20px;">WELD BOOT<span class="el">...</span></div>
<div class="t" style="top:679.00px;font-size:15.6px;line-height:15.6px;height:15.6px;color:#2f2f2f;transform:scaleX(0.9143);left:298.20px;">WELD BOOT<span class="el">...</span></div>
<div class="t" style="top:679.00px;font-size:15.6px;line-height:15.6px;height:15.6px;color:#2f2f2f;transform:scaleX(0.9469);left:410.55px;">1012336</div>
<div class="t" style="top:679.00px;font-size:15.6px;line-height:15.6px;height:15.6px;color:#2f2f2f;transform:scaleX(0.9177);left:522.38px;">10</div>
<div class="t" style="top:679.00px;font-size:15.6px;line-height:15.6px;height:15.6px;color:#2f2f2f;transform:scaleX(0.8222);right:1210.27px;transform-origin:100% 0;">0</div>
<div class="t" style="top:679.00px;font-size:15.6px;line-height:15.6px;height:15.6px;color:#08737f;transform:scaleX(0.8789);left:734.10px;">WELD SIDE PLATES &amp; COVER</div>
<div class="t" style="top:679.00px;font-size:15.6px;line-height:15.6px;height:15.6px;color:#08737f;transform:scaleX(0.8894);left:977.51px;">BATTERY BOX <span class="el">...</span></div>
<div class="t" style="top:679.00px;font-size:15.6px;line-height:15.6px;height:15.6px;color:#08737f;transform:scaleX(0.8877);left:1102.91px;">BATTERY BOX D2 LH AL</div>
<div class="t" style="top:710.00px;font-size:15.6px;line-height:15.6px;height:15.6px;color:#2f2f2f;transform:scaleX(0.9143);left:153.20px;">WELD BOOT<span class="el">...</span></div>
<div class="t" style="top:710.00px;font-size:15.6px;line-height:15.6px;height:15.6px;color:#2f2f2f;transform:scaleX(0.9143);left:298.20px;">WELD BOOT<span class="el">...</span></div>
<div class="t" style="top:710.00px;font-size:15.6px;line-height:15.6px;height:15.6px;color:#2f2f2f;transform:scaleX(0.9469);left:410.55px;">1012337</div>
<div class="t" style="top:710.00px;font-size:15.6px;line-height:15.6px;height:15.6px;color:#2f2f2f;transform:scaleX(0.9177);left:522.38px;">10</div>
<div class="t" style="top:710.00px;font-size:15.6px;line-height:15.6px;height:15.6px;color:#2f2f2f;transform:scaleX(0.8222);right:1210.27px;transform-origin:100% 0;">0</div>
<div class="t" style="top:710.00px;font-size:15.6px;line-height:15.6px;height:15.6px;color:#08737f;transform:scaleX(0.8789);left:734.10px;">WELD SIDE PLATES &amp; COVER</div>
<div class="t" style="top:710.00px;font-size:15.6px;line-height:15.6px;height:15.6px;color:#08737f;transform:scaleX(0.8894);left:977.51px;">BATTERY BOX <span class="el">...</span></div>
<div class="t" style="top:710.00px;font-size:15.6px;line-height:15.6px;height:15.6px;color:#08737f;transform:scaleX(0.8877);left:1102.91px;">BATTERY BOX D2 LH AL</div>
<div class="t" style="top:740.00px;font-size:15.6px;line-height:15.6px;height:15.6px;color:#2f2f2f;transform:scaleX(0.9143);left:153.20px;">WELD BOOT<span class="el">...</span></div>
<div class="t" style="top:740.00px;font-size:15.6px;line-height:15.6px;height:15.6px;color:#2f2f2f;transform:scaleX(0.9143);left:298.20px;">WELD BOOT<span class="el">...</span></div>
<div class="t" style="top:740.00px;font-size:15.6px;line-height:15.6px;height:15.6px;color:#2f2f2f;transform:scaleX(0.9469);left:410.55px;">1012338</div>
<div class="t" style="top:740.00px;font-size:15.6px;line-height:15.6px;height:15.6px;color:#2f2f2f;transform:scaleX(0.9177);left:522.38px;">10</div>
<div class="t" style="top:740.00px;font-size:15.6px;line-height:15.6px;height:15.6px;color:#2f2f2f;transform:scaleX(0.8222);right:1210.27px;transform-origin:100% 0;">0</div>
<div class="t" style="top:740.00px;font-size:15.6px;line-height:15.6px;height:15.6px;color:#08737f;transform:scaleX(0.8789);left:734.10px;">WELD SIDE PLATES &amp; COVER</div>
<div class="t" style="top:740.00px;font-size:15.6px;line-height:15.6px;height:15.6px;color:#08737f;transform:scaleX(0.8894);left:977.51px;">BATTERY BOX <span class="el">...</span></div>
<div class="t" style="top:740.00px;font-size:15.6px;line-height:15.6px;height:15.6px;color:#08737f;transform:scaleX(0.8794);left:1102.92px;">BATTERY BOX D2 LH SS</div>
<div class="t" style="top:771.00px;font-size:15.6px;line-height:15.6px;height:15.6px;color:#2f2f2f;transform:scaleX(0.9143);left:153.20px;">WELD BOOT<span class="el">...</span></div>
<div class="t" style="top:771.00px;font-size:15.6px;line-height:15.6px;height:15.6px;color:#2f2f2f;transform:scaleX(0.9143);left:298.20px;">WELD BOOT<span class="el">...</span></div>
<div class="t" style="top:771.00px;font-size:15.6px;line-height:15.6px;height:15.6px;color:#2f2f2f;transform:scaleX(0.9469);left:410.55px;">1012339</div>
<div class="t" style="top:771.00px;font-size:15.6px;line-height:15.6px;height:15.6px;color:#2f2f2f;transform:scaleX(0.9177);left:522.38px;">10</div>
<div class="t" style="top:771.00px;font-size:15.6px;line-height:15.6px;height:15.6px;color:#2f2f2f;transform:scaleX(0.8222);right:1210.27px;transform-origin:100% 0;">0</div>
<div class="t" style="top:771.00px;font-size:15.6px;line-height:15.6px;height:15.6px;color:#08737f;transform:scaleX(0.8789);left:734.10px;">WELD SIDE PLATES &amp; COVER</div>
<div class="t" style="top:771.00px;font-size:15.6px;line-height:15.6px;height:15.6px;color:#08737f;transform:scaleX(0.8894);left:977.51px;">BATTERY BOX <span class="el">...</span></div>
<div class="t" style="top:771.00px;font-size:15.6px;line-height:15.6px;height:15.6px;color:#08737f;transform:scaleX(0.8794);left:1102.92px;">BATTERY BOX D2 LH SS</div>
<div class="t" style="top:802.00px;font-size:15.6px;line-height:15.6px;height:15.6px;color:#2f2f2f;transform:scaleX(0.9143);left:153.20px;">WELD BOOT<span class="el">...</span></div>
<div class="t" style="top:802.00px;font-size:15.6px;line-height:15.6px;height:15.6px;color:#2f2f2f;transform:scaleX(0.9143);left:298.20px;">WELD BOOT<span class="el">...</span></div>
<div class="t" style="top:802.00px;font-size:15.6px;line-height:15.6px;height:15.6px;color:#2f2f2f;transform:scaleX(0.9311);left:410.57px;">1012340</div>
<div class="t" style="top:802.00px;font-size:15.6px;line-height:15.6px;height:15.6px;color:#2f2f2f;transform:scaleX(0.9177);left:522.38px;">10</div>
<div class="t" style="top:802.00px;font-size:15.6px;line-height:15.6px;height:15.6px;color:#2f2f2f;transform:scaleX(0.8222);right:1210.27px;transform-origin:100% 0;">0</div>
<div class="t" style="top:802.00px;font-size:15.6px;line-height:15.6px;height:15.6px;color:#08737f;transform:scaleX(0.8789);left:734.10px;">WELD SIDE PLATES &amp; COVER</div>
<div class="t" style="top:802.00px;font-size:15.6px;line-height:15.6px;height:15.6px;color:#08737f;transform:scaleX(0.8894);left:977.51px;">BATTERY BOX <span class="el">...</span></div>
<div class="t" style="top:802.00px;font-size:15.6px;line-height:15.6px;height:15.6px;color:#08737f;transform:scaleX(0.8794);left:1102.92px;">BATTERY BOX D2 LH SS</div>
<div class="t" style="top:833.00px;font-size:15.6px;line-height:15.6px;height:15.6px;color:#2f2f2f;transform:scaleX(0.9143);left:153.20px;">WELD BOOT<span class="el">...</span></div>
<div class="t" style="top:833.00px;font-size:15.6px;line-height:15.6px;height:15.6px;color:#2f2f2f;transform:scaleX(0.9143);left:298.20px;">WELD BOOT<span class="el">...</span></div>
<div class="t" style="top:833.00px;font-size:15.6px;line-height:15.6px;height:15.6px;color:#2f2f2f;transform:scaleX(0.9350);left:410.56px;">1012341</div>
<div class="t" style="top:833.00px;font-size:15.6px;line-height:15.6px;height:15.6px;color:#2f2f2f;transform:scaleX(0.9177);left:522.38px;">10</div>
<div class="t" style="top:833.00px;font-size:15.6px;line-height:15.6px;height:15.6px;color:#2f2f2f;transform:scaleX(0.8222);right:1210.27px;transform-origin:100% 0;">0</div>
<div class="t" style="top:833.00px;font-size:15.6px;line-height:15.6px;height:15.6px;color:#08737f;transform:scaleX(0.8789);left:734.10px;">WELD SIDE PLATES &amp; COVER</div>
<div class="t" style="top:833.00px;font-size:15.6px;line-height:15.6px;height:15.6px;color:#08737f;transform:scaleX(0.8894);left:977.51px;">BATTERY BOX <span class="el">...</span></div>
<div class="t" style="top:833.00px;font-size:15.6px;line-height:15.6px;height:15.6px;color:#08737f;transform:scaleX(0.8794);left:1102.92px;">BATTERY BOX D2 LH SS</div>
<div class="t" style="top:864.00px;font-size:15.6px;line-height:15.6px;height:15.6px;color:#2f2f2f;transform:scaleX(0.9143);left:153.20px;">WELD BOOT<span class="el">...</span></div>
<div class="t" style="top:864.00px;font-size:15.6px;line-height:15.6px;height:15.6px;color:#2f2f2f;transform:scaleX(0.9143);left:298.20px;">WELD BOOT<span class="el">...</span></div>
<div class="t" style="top:864.00px;font-size:15.6px;line-height:15.6px;height:15.6px;color:#2f2f2f;transform:scaleX(0.9469);left:410.55px;">1012342</div>
<div class="t" style="top:864.00px;font-size:15.6px;line-height:15.6px;height:15.6px;color:#2f2f2f;transform:scaleX(0.9177);left:522.38px;">10</div>
<div class="t" style="top:864.00px;font-size:15.6px;line-height:15.6px;height:15.6px;color:#2f2f2f;transform:scaleX(0.8222);right:1210.27px;transform-origin:100% 0;">0</div>
<div class="t" style="top:864.00px;font-size:15.6px;line-height:15.6px;height:15.6px;color:#08737f;transform:scaleX(0.8789);left:734.10px;">WELD SIDE PLATES &amp; COVER</div>
<div class="t" style="top:864.00px;font-size:15.6px;line-height:15.6px;height:15.6px;color:#08737f;transform:scaleX(0.8894);left:977.51px;">BATTERY BOX <span class="el">...</span></div>
<div class="t" style="top:864.00px;font-size:15.6px;line-height:15.6px;height:15.6px;color:#08737f;transform:scaleX(0.8794);left:1102.92px;">BATTERY BOX D2 LH SS</div>
<div class="t" style="top:894.00px;font-size:15.6px;line-height:15.6px;height:15.6px;color:#2f2f2f;transform:scaleX(0.9143);left:153.20px;">WELD BOOT<span class="el">...</span></div>
<div class="t" style="top:894.00px;font-size:15.6px;line-height:15.6px;height:15.6px;color:#2f2f2f;transform:scaleX(0.9143);left:298.20px;">WELD BOOT<span class="el">...</span></div>
<div class="t" style="top:894.00px;font-size:15.6px;line-height:15.6px;height:15.6px;color:#2f2f2f;transform:scaleX(0.9469);left:410.55px;">1012343</div>
<div class="t" style="top:894.00px;font-size:15.6px;line-height:15.6px;height:15.6px;color:#2f2f2f;transform:scaleX(0.9177);left:522.38px;">10</div>
<div class="t" style="top:894.00px;font-size:15.6px;line-height:15.6px;height:15.6px;color:#2f2f2f;transform:scaleX(0.8222);right:1210.27px;transform-origin:100% 0;">0</div>
<div class="t" style="top:894.00px;font-size:15.6px;line-height:15.6px;height:15.6px;color:#08737f;transform:scaleX(0.8789);left:734.10px;">WELD SIDE PLATES &amp; COVER</div>
<div class="t" style="top:894.00px;font-size:15.6px;line-height:15.6px;height:15.6px;color:#08737f;transform:scaleX(0.8894);left:977.51px;">BATTERY BOX <span class="el">...</span></div>
<div class="t" style="top:894.00px;font-size:15.6px;line-height:15.6px;height:15.6px;color:#08737f;transform:scaleX(0.8794);left:1102.92px;">BATTERY BOX D2 LH SS</div>
<div class="t" style="top:925.00px;font-size:15.6px;line-height:15.6px;height:15.6px;color:#2f2f2f;transform:scaleX(0.9143);left:153.20px;">WELD BOOT<span class="el">...</span></div>
<div class="t" style="top:925.00px;font-size:15.6px;line-height:15.6px;height:15.6px;color:#2f2f2f;transform:scaleX(0.9143);left:298.20px;">WELD BOOT<span class="el">...</span></div>
<div class="t" style="top:925.00px;font-size:15.6px;line-height:15.6px;height:15.6px;color:#2f2f2f;transform:scaleX(0.9311);left:410.57px;">1012344</div>
<div class="t" style="top:925.00px;font-size:15.6px;line-height:15.6px;height:15.6px;color:#2f2f2f;transform:scaleX(0.9177);left:522.38px;">10</div>
<div class="t" style="top:925.00px;font-size:15.6px;line-height:15.6px;height:15.6px;color:#2f2f2f;transform:scaleX(0.8222);right:1210.27px;transform-origin:100% 0;">0</div>
<div class="t" style="top:925.00px;font-size:15.6px;line-height:15.6px;height:15.6px;color:#08737f;transform:scaleX(0.8789);left:734.10px;">WELD SIDE PLATES &amp; COVER</div>
<div class="t" style="top:925.00px;font-size:15.6px;line-height:15.6px;height:15.6px;color:#08737f;transform:scaleX(0.8894);left:977.51px;">BATTERY BOX <span class="el">...</span></div>
<div class="t" style="top:925.00px;font-size:15.6px;line-height:15.6px;height:15.6px;color:#08737f;transform:scaleX(0.8794);left:1102.92px;">BATTERY BOX D2 LH SS</div>
<div class="t" style="top:956.00px;font-size:15.6px;line-height:15.6px;height:15.6px;color:#2f2f2f;transform:scaleX(0.8576);left:153.20px;">4K LASER</div>
<div class="t" style="top:956.00px;font-size:15.6px;line-height:15.6px;height:15.6px;color:#2f2f2f;transform:scaleX(0.8615);left:298.20px;">4K LASER SB 1</div>
<div class="t" style="top:956.00px;font-size:15.6px;line-height:15.6px;height:15.6px;color:#2f2f2f;transform:scaleX(0.9311);left:410.57px;">1012345</div>
<div class="t" style="top:956.00px;font-size:15.6px;line-height:15.6px;height:15.6px;color:#2f2f2f;transform:scaleX(0.9177);left:522.38px;">10</div>
<div class="t" style="top:956.00px;font-size:15.6px;line-height:15.6px;height:15.6px;color:#2f2f2f;transform:scaleX(0.8222);right:1210.27px;transform-origin:100% 0;">0</div>
<div class="t" style="top:956.00px;font-size:15.6px;line-height:15.6px;height:15.6px;color:#08737f;transform:scaleX(0.9022);left:734.10px;">4000 WATT LASER</div>
<div class="t" style="top:956.00px;font-size:15.6px;line-height:15.6px;height:15.6px;color:#08737f;transform:scaleX(0.8911);left:977.51px;">BRKT LONG 1</div>
<div class="t" style="top:956.00px;font-size:15.6px;line-height:15.6px;height:15.6px;color:#08737f;transform:scaleX(0.8679);left:1103.80px;">SUPPORT BRACKET LONG</div>
<div class="t" style="top:987.00px;font-size:15.6px;line-height:15.6px;height:15.6px;color:#2f2f2f;transform:scaleX(0.8640);left:153.54px;">120T BRAKES</div>
<div class="t" style="top:987.00px;font-size:15.6px;line-height:15.6px;height:15.6px;color:#2f2f2f;transform:scaleX(0.8640);left:298.54px;">120T BRAKES</div>
<div class="t" style="top:987.00px;font-size:15.6px;line-height:15.6px;height:15.6px;color:#2f2f2f;transform:scaleX(0.9311);left:410.57px;">1012345</div>
<div class="t" style="top:987.00px;font-size:15.6px;line-height:15.6px;height:15.6px;color:#2f2f2f;transform:scaleX(0.8771);left:523.30px;">20</div>
<div class="t" style="top:987.00px;font-size:15.6px;line-height:15.6px;height:15.6px;color:#2f2f2f;transform:scaleX(0.8222);right:1210.27px;transform-origin:100% 0;">0</div>
<div class="t" style="top:987.00px;font-size:15.6px;line-height:15.6px;height:15.6px;color:#08737f;transform:scaleX(0.8906);left:734.10px;">90T BRAKE 10'</div>
<div class="t" style="top:987.00px;font-size:15.6px;line-height:15.6px;height:15.6px;color:#08737f;transform:scaleX(0.8911);left:977.51px;">BRKT LONG 1</div>
<div class="t" style="top:987.00px;font-size:15.6px;line-height:15.6px;height:15.6px;color:#08737f;transform:scaleX(0.8679);left:1103.80px;">SUPPORT BRACKET LONG</div>
</body></html>
